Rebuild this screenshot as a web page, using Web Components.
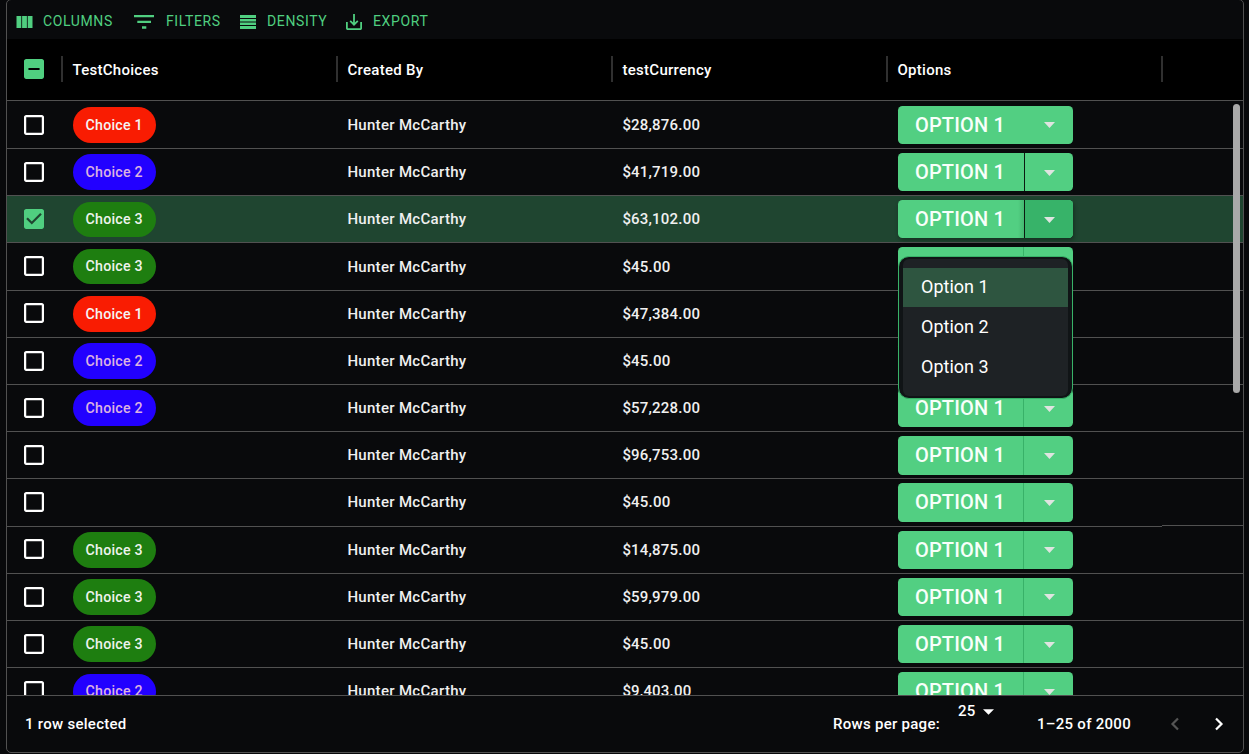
<!DOCTYPE html>
<html lang="en">
<head>
<meta charset="utf-8">
<title>Data grid</title>
<style>
html,body{margin:0;height:100%;background:#08090b;overflow:hidden}
body{font-family:Roboto,"Liberation Sans",sans-serif;color:#fff}
</style>
</head>
<body>
<data-grid></data-grid>
<script>
const define = (name, html, setup) => {
  const t = document.createElement('template');
  t.innerHTML = html;
  customElements.define(name, class extends HTMLElement {
    connectedCallback() {
      if (this.shadowRoot) return;
      this.attachShadow({ mode: 'open' }).append(t.content.cloneNode(true));
      if (setup) setup(this, this.shadowRoot);
    }
  });
};

// Each toolbar icon: [width, height, viewBox, path]
const toolIcons = {
  columns: [17, 12, '0 0 17 12', 'M.500 0h4.800v12H.500zM6.100 0h4.800v12H6.100zM11.700 0h4.800v12h-4.800z'],
  filters: [20, 14, '0 0 20 14', 'M0 0h20v2.300H0zM3.300 5.700h13.700v2.200H3.300zM8 11.300h4.300v2.400H8z'],
  density: [16, 14, '0 0 16 14', 'M0 0h16v2.900H0zM0 4h16v2.500H0zM0 7.600h16v2.400H0zM0 11.100h16v2.900H0z'],
  export: [16, 16, '3 3 18 18', 'M19 12v7H5v-7H3v7c0 1.100.900 2 2 2h14c1.100 0 2-.900 2-2v-7h-2zm-6 .670l2.590-2.580L17 11.500l-5 5-5-5 1.410-1.410L11 12.670V3h2z']
};
define('tool-button', `
<style>
:host{display:flex;align-items:center;color:#50cf80;font-size:14px;letter-spacing:.62px;line-height:20px;white-space:nowrap}
svg{display:block;fill:currentColor;margin-right:var(--gap,10px);margin-top:1px}
</style>
<svg><path></path></svg><slot></slot>`, (el, root) => {
  const [w, h, vb, d] = toolIcons[el.getAttribute('icon')];
  const s = root.querySelector('svg');
  s.setAttribute('width', w);
  s.setAttribute('height', h);
  s.setAttribute('viewBox', vb);
  s.firstChild.setAttribute('d', d);
});

const boxPaths = {
  off: 'M19 5v14H5V5h14m0-2H5c-1.100 0-2 .900-2 2v14c0 1.100.900 2 2 2h14c1.100 0 2-.900 2-2V5c0-1.100-.900-2-2-2z',
  on: 'M19 3H5c-1.110 0-2 .900-2 2v14c0 1.100.890 2 2 2h14c1.110 0 2-.900 2-2V5c0-1.100-.890-2-2-2zm-9 14l-5-5 1.410-1.410L10 14.170l7.590-7.590L19 8l-9 9z',
  some: 'M19 3H5c-1.100 0-2 .900-2 2v14c0 1.100.900 2 2 2h14c1.100 0 2-.900 2-2V5c0-1.100-.900-2-2-2zm-2 10H7v-2h10v2z'
};
define('check-box', `
<style>
:host{display:block;width:20px;height:20px;color:#fff}
:host([state=on]),:host([state=some]){color:#50cf80}
svg{display:block;width:20px;height:20px;fill:currentColor}
</style>
<svg viewBox="3 3 18 18"><path></path></svg>`, (el, root) =>
  root.querySelector('path').setAttribute('d', boxPaths[el.getAttribute('state') || 'off']));

define('choice-chip', `
<style>
:host{display:flex;box-sizing:border-box;align-items:center;width:83px;height:35.6px;padding:0 0 .5px 12.500px;border-radius:18px;font-size:14.2px;font-weight:500;line-height:20px;letter-spacing:.25px;color:#f4f4f4}
:host([kind="1"]){background:#f91c02}
:host([kind="2"]){background:#2200ff;color:#dcb2e2}
:host([kind="3"]){background:#1e7e10;color:#eef3ed}
</style>
<slot></slot>`);

define('split-button', `
<style>
:host{display:flex;width:175px;height:38.4px;border-radius:4.500px;overflow:hidden;background:#52cf82;color:#f8fffa}
.main{box-sizing:border-box;width:126px;padding-left:17px;border-right:1px solid #38b268;font-size:20px;font-weight:500;line-height:39px;letter-spacing:.15px;white-space:nowrap}
.more{flex:1;display:flex;align-items:center;justify-content:center}
svg{width:11px;height:6px;fill:#dfe4e0;margin-top:1px;margin-left:2px}
:host([variant=plain]) .main{border-color:transparent}
:host([variant=gap]) .main,:host([variant=open]) .main{width:127px;border-color:#0b1a11}
:host([variant=open]){box-shadow:1px 2px 4px #0005}
:host([variant=open]) .main{background:linear-gradient(90deg,transparent 120px,#45b871)}
:host([variant=open]) .more{background:#37b369}
:host([variant=gap]) svg,:host([variant=open]) svg{margin-left:1px}
</style>
<div class="main"><slot></slot></div><div class="more"><svg viewBox="0 0 10 5" preserveAspectRatio="none"><path d="M0 0h10L5 5z"/></svg></div>`);

define('grid-header', `
<style>
:host{display:flex;box-sizing:border-box;height:62px;background:#000;border-bottom:1px solid #515151;align-items:flex-start;font-size:15px;font-weight:500;letter-spacing:.27px}
.check{width:54px;box-sizing:border-box;padding:20px 0 0 17px}
.col{display:flex;box-sizing:border-box;width:275px;height:26px;margin-top:17px;border-left:2px solid #303030;padding-left:9.500px;line-height:28px}
.col:last-child{width:60px}
</style>
<div class="check"><check-box state="some"></check-box></div>
<div class="col">TestChoices</div><div class="col">Created By</div><div class="col">testCurrency</div><div class="col">Options</div><div class="col"></div>`);

define('grid-row', `
<style>
:host{display:flex;height:47.204px;align-items:flex-start;font-size:15px;font-weight:500;letter-spacing:.3px;color:#f0f0f0}
:host([selected]){background:#1f4530}
.cell{box-sizing:border-box;width:275px;height:47.204px;border-bottom:1px solid #515151;padding-left:11px;line-height:var(--line,47px);white-space:nowrap}
.cell.who,.cell.money{padding-left:10.400px}
.money{letter-spacing:.2px}
.cell.check{width:55px;padding:12.780px 0 0 17px}
.chip{padding-top:5.500px}
.opt{padding-top:3.950px}
.cell.rest{flex:1;width:auto}
:host([short]) .rest{height:46.800px}
</style>
<div class="cell check"></div><div class="cell chip"></div><div class="cell who">Hunter McCarthy</div><div class="cell money"></div><div class="cell opt"></div><div class="cell rest"></div>`, (el, root) => {
  const q = s => root.querySelector(s);
  const c = document.createElement('check-box');
  if (el.hasAttribute('selected')) c.setAttribute('state', 'on');
  q('.check').append(c);
  const kind = el.getAttribute('choice');
  if (kind) {
    const chip = document.createElement('choice-chip');
    chip.setAttribute('kind', kind);
    chip.textContent = 'Choice ' + kind;
    q('.chip').append(chip);
  }
  q('.money').textContent = el.getAttribute('amount');
  const b = document.createElement('split-button');
  b.setAttribute('variant', el.getAttribute('variant') || 'line');
  b.textContent = 'OPTION 1';
  q('.opt').append(b);
});

define('option-menu', `
<style>
:host{display:block;box-sizing:border-box;width:175px;height:143px;border:1px solid #38b268;border-radius:11px;background:#101416;padding:2px 4px;font-size:18px;color:#fff}
ul{list-style:none;margin:0;padding:9px 0 8px;height:120px;border-radius:6px;background:#1e2225}
li{height:40px;line-height:37px;padding-left:18px}
li:first-child{background:linear-gradient(#2e5540,#2e5540) 0 0/100% 39px no-repeat}
</style>
<ul><li>Option 1</li><li>Option 2</li><li>Option 3</li></ul>`);

define('grid-footer', `
<style>
:host{display:flex;box-sizing:border-box;height:57px;border-top:1px solid #515151;font-size:15px;font-weight:500;letter-spacing:.28px;line-height:56px;padding-left:18px;white-space:nowrap}
.grow{flex:1}
.per{width:125px}
.size{width:79px;line-height:31px;display:flex}
.size svg{width:11px;height:6px;margin:13px 0 0 7px;fill:#fff}
.range{width:133px}
.nav{display:flex;width:73px;padding-top:21px}
.nav svg{width:10px;height:14px;margin-right:34px;flex:none;fill:none;stroke:#fff;stroke-width:2.200}
.nav svg:first-child{stroke:#555}
</style>
<div>1 row selected</div><div class="grow"></div>
<div class="per">Rows per page:</div>
<div class="size">25<svg viewBox="0 0 10 5"><path d="M0 0h10L5 5z"/></svg></div>
<div class="range">1–25 of 2000</div>
<div class="nav"><svg viewBox="0 0 10 14"><path d="M8 1.500L2.500 7 8 12.500"/></svg><svg viewBox="0 0 10 14"><path d="M2 1.500L7.500 7 2 12.500"/></svg></div>`);

define('data-grid', `
<style>
:host{display:flex;flex-direction:column;box-sizing:border-box;position:relative;width:1238px;height:754px;margin:-1px 0 0 6px;border:1px solid #515151;border-radius:5px;background:#090a0c}
.bar{display:flex;height:39px;padding:3px 0 0 9px;box-sizing:border-box;align-items:center}
.bar>:nth-child(1){width:118px}
.bar>:nth-child(2){width:106px;--gap:12px}
.bar>:nth-child(3){width:106px;--gap:11px}
.bar>:nth-child(4){--gap:11px}
.rows{flex:1;min-height:0;overflow:hidden;padding-top:.75px}
.thumb{position:absolute;left:1226px;top:104px;width:7px;height:289px;border-radius:4px;background:#a9a9a9}
option-menu{position:absolute;left:891px;top:256px}
.low{--line:48px}
</style>
<div class="bar"><tool-button icon="columns">COLUMNS</tool-button><tool-button icon="filters">FILTERS</tool-button><tool-button icon="density">DENSITY</tool-button><tool-button icon="export">EXPORT</tool-button></div>
<grid-header></grid-header>
<div class="rows">
<grid-row choice="1" amount="$28,876.00" variant="plain"></grid-row>
<grid-row choice="2" amount="$41,719.00" variant="gap"></grid-row>
<grid-row choice="3" amount="$63,102.00" variant="open" selected></grid-row>
<grid-row choice="3" amount="$45.00" class="low"></grid-row>
<grid-row choice="1" amount="$47,384.00"></grid-row>
<grid-row choice="2" amount="$45.00"></grid-row>
<grid-row choice="2" amount="$57,228.00"></grid-row>
<grid-row amount="$96,753.00"></grid-row>
<grid-row amount="$45.00" short></grid-row>
<grid-row choice="3" amount="$14,875.00"></grid-row>
<grid-row choice="3" amount="$59,979.00"></grid-row>
<grid-row choice="3" amount="$45.00"></grid-row>
<grid-row choice="2" amount="$9,403.00"></grid-row>
</div>
<grid-footer></grid-footer>
<div class="thumb"></div>
<option-menu></option-menu>`);
</script>
</body>
</html>
